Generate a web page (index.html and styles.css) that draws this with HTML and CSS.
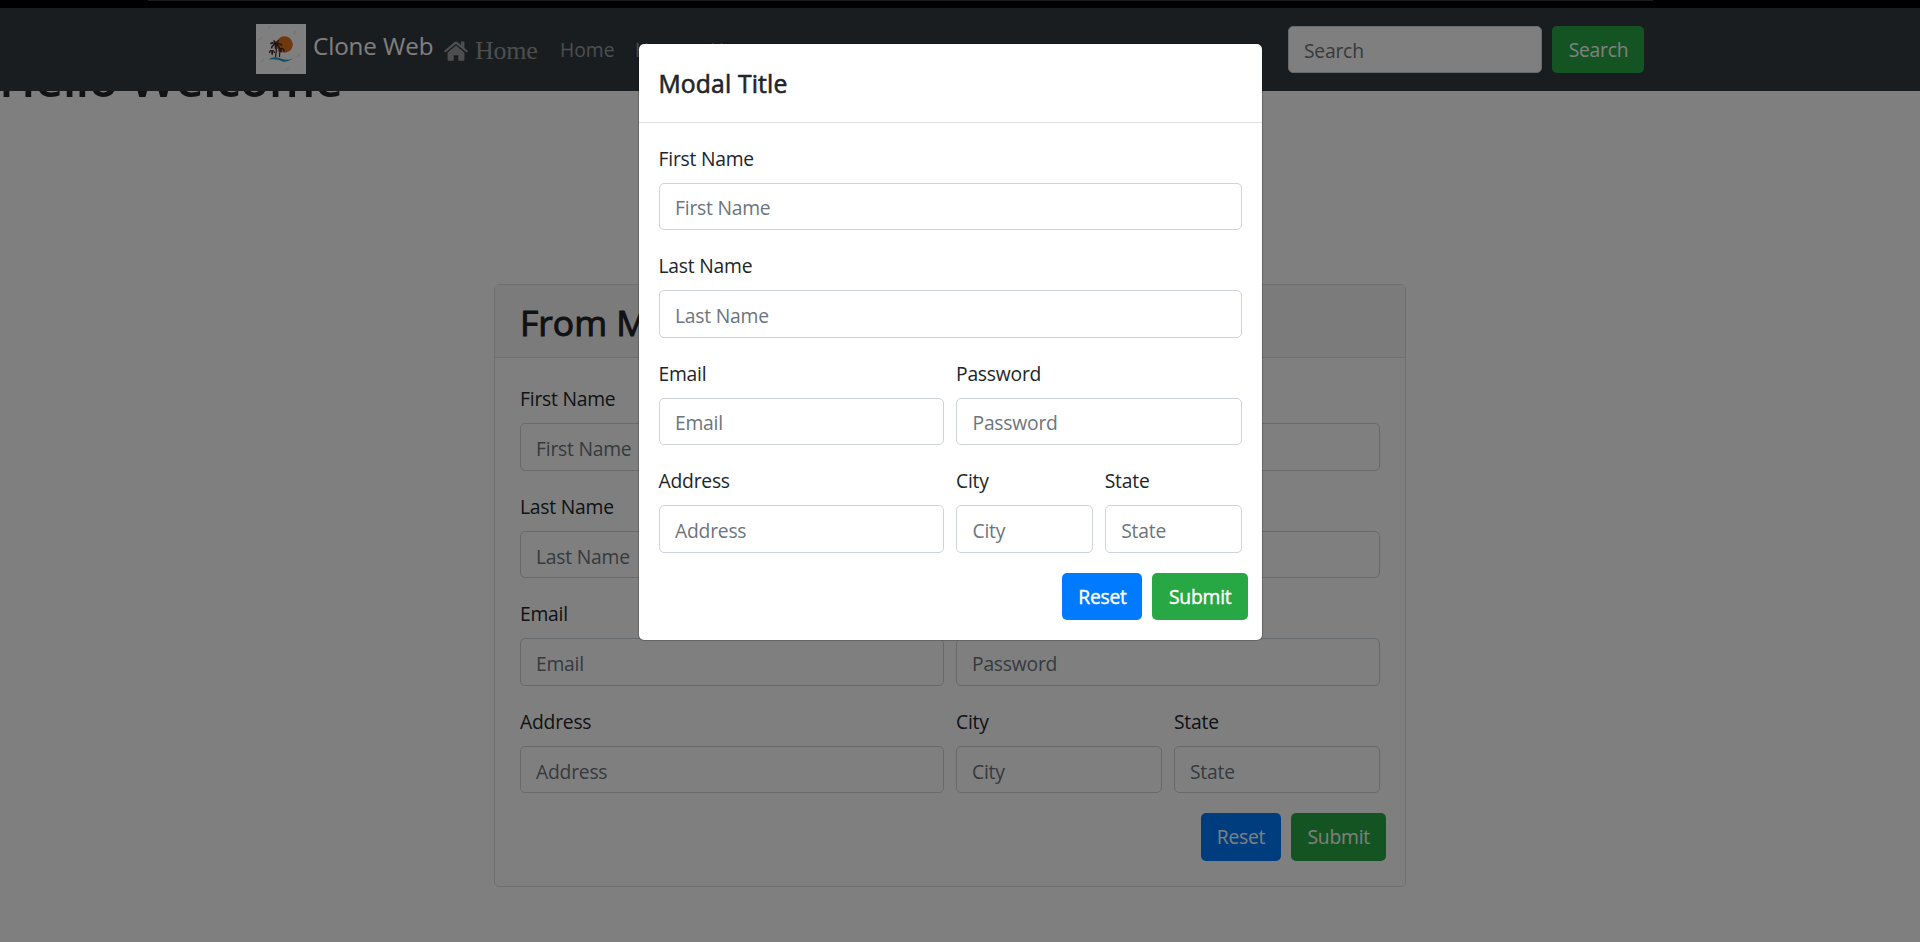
FILE: index.html
```html
<!DOCTYPE html>
<html lang="en">
<head>
<meta charset="utf-8">
<title>Clone Web</title>
<link rel="stylesheet" href="styles.css">
</head>
<body>
<div class="page">
  <div class="topbar"><div class="topbar-line"></div></div>
  <nav class="navbar">
    <a class="brand">
      <svg class="logo" viewBox="0 0 50 50">
        <rect width="50" height="50" fill="#fff"/>
        <path d="M12 5l3-3M37 10l3-3M3 16l3-3M41 33l3-3M5 38l3-3M30 46l3-3" stroke="#e8e8e8" stroke-width="1.2"/>
        <circle cx="28.500" cy="20.500" r="8.300" fill="#e0701c"/>
        <path d="M19.500 33Q21 27 20 20.500M23.500 33Q23 28 25 24.500M16 31Q17 29 16 27" stroke="#3d2a24" stroke-width="1.200" fill="none"/>
        <path d="M20 20.500Q17 17.500 14.500 20M20 20.500Q16 20.500 15.500 24.500M20 20.500Q19 17 17.500 16.500M20 20.500Q20.500 17 23 17M20 20.500Q24 18.500 26 21.500M20 20.500Q23 21.500 23.500 24.500M20 20.500Q19 23 19.500 25" stroke="#3d2a24" stroke-width="1.500" fill="none"/>
        <path d="M16 27q-2.500-1-2.500 2M16 27q2-1 2.500 2M16 27v3M25 24.500q-2.500 0-2 3M25 24.500q3-.5 3 3M25 24.500v4" stroke="#3d2a24" stroke-width="1.300" fill="none"/>
        <path d="M12.500 35.500Q18 31.500 24 34.300T37 34.500Q32 38 27.500 37.700 21 34.500 12.500 35.500z" fill="#2299c4"/>
      </svg>
      <span class="brand-name">Clone Web</span>
    </a>
    <a class="home-link">
      <svg class="home-icon" viewBox="0 0 24 20"><path d="M12 4.500L3.600 11.400V19q0 .8.800.8h5.300v-5.600h4.600v5.600h5.300q.8 0 .8-.8v-7.600z"/><path d="M23.700 9.700L20.400 6.900V1q0-.5-.5-.5h-2.500q-.5 0-.5.5v2.900L13.500 1q-1.500-1.200-3 0L.3 9.700q-.3.300 0 .6l.8 1q.3.300.6 0L12 2.900l10.300 8.400q.3.300.6 0l.8-1q.3-.3 0-.6z"/></svg>
      <span>Home</span>
    </a>
    <a class="nav-link">Home</a>
    <a class="nav-link">Home</a>
    <a class="nav-link">Home</a>
    <form class="search">
      <input class="control search-control" placeholder="Search">
      <button class="btn btn-green btn-search" type="button">Search</button>
    </form>
  </nav>
  <h1 class="welcome">Hello Welcome</h1>
  <section class="card">
    <header class="card-header">From Modal</header>
    <form class="card-body">
      <div class="group"><label>First Name</label><input class="control" placeholder="First Name"></div>
      <div class="group"><label>Last Name</label><input class="control" placeholder="Last Name"></div>
      <div class="row">
        <div class="group wide"><label>Email</label><input class="control" placeholder="Email"></div>
        <div class="group wide"><label>Password</label><input class="control" placeholder="Password"></div>
      </div>
      <div class="row">
        <div class="group wide"><label>Address</label><input class="control" placeholder="Address"></div>
        <div class="group"><label>City</label><input class="control" placeholder="City"></div>
        <div class="group"><label>State</label><input class="control" placeholder="State"></div>
      </div>
      <div class="actions"><button class="btn btn-blue" type="button">Reset</button><button class="btn btn-green" type="button">Submit</button></div>
    </form>
  </section>
</div>
<div class="backdrop">
  <section class="modal">
    <header class="modal-header">Modal Title</header>
    <form class="modal-body">
      <div class="group"><label>First Name</label><input class="control" placeholder="First Name"></div>
      <div class="group"><label>Last Name</label><input class="control" placeholder="Last Name"></div>
      <div class="row">
        <div class="group wide"><label>Email</label><input class="control" placeholder="Email"></div>
        <div class="group wide"><label>Password</label><input class="control" placeholder="Password"></div>
      </div>
      <div class="row">
        <div class="group wide"><label>Address</label><input class="control" placeholder="Address"></div>
        <div class="group"><label>City</label><input class="control" placeholder="City"></div>
        <div class="group"><label>State</label><input class="control" placeholder="State"></div>
      </div>
      <div class="actions"><button class="btn btn-blue" type="button">Reset</button><button class="btn btn-green" type="button">Submit</button></div>
    </form>
  </section>
</div>
</body>
</html>
```
FILE: styles.css
```css
* { box-sizing: border-box; }
body {
  margin: 0;
  height: 942px;
  overflow: hidden;
  background: #fff;
  color: #212529;
  font: 19.3px/30px "Open Sans", "Noto Sans", sans-serif;
  letter-spacing: -.22px;
}
.page { height: 942px; overflow: hidden; }
.topbar { height: 8px; background: #000; }
.topbar-line { width: 1505px; height: 1px; margin-left: 148px; background: #34383f; }
.navbar {
  position: relative;
  z-index: 1;
  display: flex;
  align-items: center;
  height: 83px;
  padding: 0 276px 0 256px;
  background: #343a40;
}
.brand { display: flex; margin-bottom: 1px; color: #fff; }
.logo { width: 50px; height: 50px; }
.brand-name { width: 121px; margin-left: 7px; font-size: 24.2px; letter-spacing: -.1px; line-height: 44px; white-space: nowrap; }
.home-link {
  display: flex;
  align-items: center;
  gap: 7px;
  width: 96px;
  margin: 2px 20px 0 10px;
  color: #9a9da0;
  font: 26px/30px "Liberation Serif", serif;
}
.home-link span { padding-top: 1px; }
.home-icon { width: 24px; height: 20px; fill: currentColor; }
.nav-link { width: 54px; margin-right: 21px; color: #9a9da0; letter-spacing: 0; }
.search { display: flex; gap: 10px; margin-left: auto; }
.search .search-control { width: 254px; }
.welcome { margin: -43px 0 0 -1px; font: 600 49px/60px "Open Sans", sans-serif; letter-spacing: -.7px; white-space: nowrap; }
.card {
  width: 912px;
  height: 603px;
  margin: 176px 0 0 494px;
  border: 1px solid #dfdfdf;
  border-radius: 5px;
}
.card-header {
  height: 73px;
  padding: 16px 25px 14px;
  border-bottom: 1px solid #dfdfdf;
  background: #f7f7f7;
  font-size: 35.5px;
  letter-spacing: 0;
  line-height: 43px;
  -webkit-text-stroke: 1px currentColor;
}
.card-body { padding: 25px; }
.group { flex: 1 1 0; min-width: 0; margin-bottom: 20px; }
.wide { flex: 0 0 calc(50% - 6px); }
.group label { display: block; padding-top: 1px; margin-bottom: 9px; }
.row { display: flex; gap: 12px; }
.control {
  display: block;
  width: 100%;
  height: 47.5px;
  padding: 9px 15px 7px;
  border: 1px solid #ced4da;
  border-radius: 5px;
  background: #fff;
  font: inherit;
  letter-spacing: inherit;
}
.control::placeholder { color: #6c757d; opacity: 1; }
.card .control { padding-top: 10px; padding-bottom: 6px; }
.modal .control { padding-top: 9.5px; padding-bottom: 6.5px; padding-left: 15.5px; }
.actions { display: flex; justify-content: flex-end; gap: 10px; margin-right: -6px; }
.btn {
  width: 95.5px;
  height: 47.5px;
  padding: 1px 0 0 1px;
  border: 0;
  border-radius: 5px;
  color: #fff;
  font: inherit;
  letter-spacing: inherit;
}
.btn-blue { width: 80px; background: #007bff; }
.btn-green { background: #28a745; }
.search .btn-search { width: 92px; }
.backdrop { position: absolute; inset: 0; z-index: 2; background: rgba(0, 0, 0, .5); }
.modal {
  width: 625px;
  height: 598px;
  margin: 42.7px 0 0 637.5px;
  border: 1px solid rgba(0, 0, 0, .2);
  border-radius: 6px;
  background: #fff;
  background-clip: padding-box;
}
.modal-header {
  height: 79px;
  padding: 20px;
  border-bottom: 1px solid #dee2e6;
  font-size: 24.7px;
  letter-spacing: .15px;
  line-height: 39px;
  -webkit-text-stroke: .6px currentColor;
}
.modal-body { padding: 20px; }
.modal .btn { -webkit-text-stroke: .4px currentColor; }
```
